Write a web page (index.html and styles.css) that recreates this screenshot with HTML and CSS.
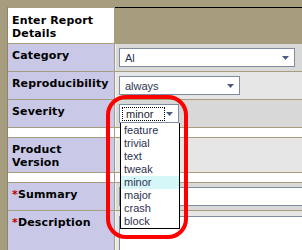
FILE: index.html
```html
<!DOCTYPE html>
<html lang="en">
<head>
    <meta charset="UTF-8">
    <title>Enter Report Details</title>
    <link rel="stylesheet" href="styles.css">
</head>

<body>

<div class="report-form">
    <div class="label head">Enter Report Details</div>
    <div class="head-right"></div>

    <div class="label">Category</div>
    <div class="field dark">
        <div class="select wide">
            <span class="value">Al</span>
            <svg class="arrow" width="7" height="4" viewBox="0 0 7 4"><polygon points="0,0 7,0 3.5,4" fill="#4d5d80"/></svg>
        </div>
    </div>

    <div class="label">Reproducibility</div>
    <div class="field light">
        <div class="select mid">
            <span class="value">always</span>
            <svg class="arrow" width="7" height="4" viewBox="0 0 7 4"><polygon points="0,0 7,0 3.5,4" fill="#4d5d80"/></svg>
        </div>
    </div>

    <div class="label">Severity</div>
    <div class="field dark">
        <div class="select small">
            <span class="value focus">minor</span>
            <svg class="arrow" width="7" height="4" viewBox="0 0 7 4"><polygon points="0,0 7,0 3.5,4" fill="#4d5d80"/></svg>
            <ul class="options">
                <li>feature</li>
                <li>trivial</li>
                <li>text</li>
                <li>tweak</li>
                <li class="hover">minor</li>
                <li>major</li>
                <li>crash</li>
                <li>block</li>
            </ul>
        </div>
    </div>

    <div class="spacer"></div>
    <div class="spacer"></div>

    <div class="label">Product Version</div>
    <div class="field light"></div>

    <div class="spacer"></div>
    <div class="spacer"></div>

    <div class="label"><span class="req">*</span>Summary</div>
    <div class="field dark">
        <div class="text-input"></div>
    </div>

    <div class="label"><span class="req">*</span>Description</div>
    <div class="field light">
        <div class="text-area"></div>
    </div>

    <!-- red marker drawn over the severity list -->
    <div class="annotation"></div>
</div>

</body>
</html>
```

FILE: styles.css
```css
body {
    margin: 0;
    background-color: #a69c7e;
    overflow: hidden;
    font-family: "DejaVu Sans", Verdana, sans-serif;
}
.report-form {
    position: relative;
    display: grid;
    grid-template-columns: 106px 1fr;
    grid-template-rows: 36px 27px 27px 27px 9px 34px 9px 27px 39px;
    gap: 1px;
    margin: 7px 0 0 7px;
    border-left: 1px solid #8e8569;
    background-color: #a69c7e;
}
.label {
    background-color: #c9c9e7;
    padding: 5px 4px 0 4px;
    font-size: 11px;
    font-weight: bold;
    line-height: 13px;
    letter-spacing: 0.15px;
    color: #000;
}
.label.head {
    background-color: #fff;
    border-top: 1px solid #a69c7e;
    padding-top: 6px;
}
.head-right {
    border-top: 1px solid #000;
}
.req {
    color: #c00000;
}
.field {
    border-left: 1px solid #f4f4f4;
    padding: 4px 0 0 3px;
}
.field.dark {
    background-color: #d8d8d8;
}
.field.light {
    background-color: #e6e6e6;
}
.spacer {
    background-color: #fff;
}
.select {
    position: relative;
    display: flex;
    align-items: center;
    box-sizing: border-box;
    height: 19px;
    padding-left: 5px;
    border: 1px solid #7f8ca0;
    background-color: #fff;
    font-family: "Liberation Sans", Arial, sans-serif;
    font-size: 11px;
    color: #2e3350;
}
.select.wide {
    width: 176px;
}
.select.mid {
    width: 121px;
}
.select.small {
    width: 60px;
    padding-left: 2px;
}
.arrow {
    margin-left: auto;
    margin-right: 5px;
}
.value.focus {
    box-sizing: border-box;
    width: 43px;
    height: 14px;
    padding-left: 3px;
    line-height: 12px;
    border: 1px dotted #000;
    color: #1c1c30;
}
.options {
    position: absolute;
    left: 0;
    top: 18px;
    z-index: 1;
    box-sizing: border-box;
    width: 60px;
    margin: 0;
    padding: 1px 0 0 0;
    list-style-type: none;
    background-color: #fff;
    border: 1px solid #000;
    border-top: none;
}
.options li {
    height: 13px;
    line-height: 13px;
    padding-left: 3px;
}
.options li.hover {
    background-color: #d6f7f8;
}
.text-input {
    box-sizing: border-box;
    width: 100%;
    height: 19px;
    border: 1px solid #7f8ca0;
    border-right: none;
    background-color: #fff;
}
.text-area {
    box-sizing: border-box;
    width: 100%;
    height: 34px;
    margin-top: 1px;
    border: 1px solid #7f8ca0;
    border-right: none;
    border-bottom: none;
    background-color: #fff;
}
.annotation {
    position: absolute;
    left: 98px;
    top: 88px;
    z-index: 2;
    box-sizing: border-box;
    width: 82px;
    height: 144px;
    border: 4px solid #f00;
    border-radius: 20px;
}
```
